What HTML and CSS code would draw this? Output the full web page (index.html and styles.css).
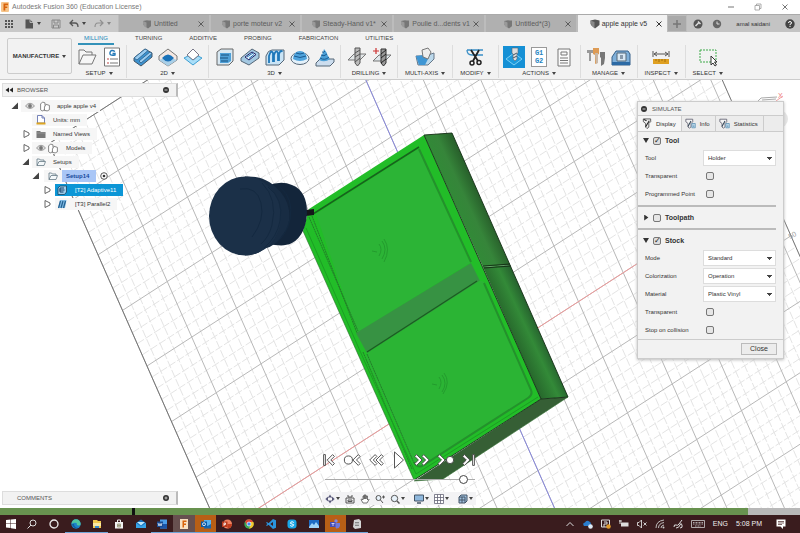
FILE: index.html
```html
<!DOCTYPE html>
<html lang="en">
<head>
<meta charset="utf-8">
<title>Autodesk Fusion 360 (Education License)</title>
<link rel="stylesheet" href="styles.css">
</head>
<body>
<svg class="sprite" aria-hidden="true">
  <defs>
    <symbol id="cube" viewBox="0 0 10 10"><path d="M1 2 5 1l4 1v5L6 9 5 4 1 3.500z" fill="#858585"/><path d="M1 2h5l3-.5V7L6 9.500 2.500 7 1 5z" fill="#777"/><path d="M1 2l3.500 1.500V9L2 7 1 5z" fill="#9a9a9a"/></symbol>
    <symbol id="cube-dark" viewBox="0 0 10 10"><path d="M.5 1.500 5 .5l4.500 1V6L5 9.500 2 7 .5 5z" fill="#555"/><path d="M.5 1.500 4.500 3v6L1.500 6.500z" fill="#888"/></symbol>
    <symbol id="x" viewBox="0 0 8 8"><path d="M1.500 1.500l5 5M6.500 1.500l-5 5" stroke="currentColor" fill="none"/></symbol>
    <symbol id="eye" viewBox="0 0 10 8"><path d="M.5 4Q5-1.500 9.500 4 5 9 .5 4z" fill="#ddd" stroke="#888" stroke-width=".8"/><circle cx="5" cy="4" r="1.900" fill="#777"/></symbol>
    <symbol id="comp" viewBox="0 0 10 10"><path d="M1 2.500 3 1l2 .7V4l1-1 3 1v4L7 9 4.500 8.500V8L2.500 9 1 8z" fill="#fff" stroke="#666" stroke-width=".7"/><path d="M4.500 8.500V5L6 4" fill="none" stroke="#666" stroke-width=".7"/></symbol>
    <symbol id="folder" viewBox="0 0 10 10"><path d="M1 8.500V2h2.500l.8 1H8v1.500M1 8.500l2-4h6.500L8 8.500z" fill="#f4f8fa" stroke="#667a85" stroke-width=".8"/></symbol>
    <symbol id="folder-grey" viewBox="0 0 10 10"><path d="M.5 2H4l1 1h4.500v6h-9z" fill="#777"/><path d="M.5 4h9" stroke="#aaa" stroke-width=".6"/></symbol>
    <symbol id="units" viewBox="0 0 10 10"><path d="M1.500.5H6L8.500 3v5h-7z" fill="#fff" stroke="#5566aa" stroke-width=".8"/><path d="M6 .5V3h2.500" fill="none" stroke="#5566aa" stroke-width=".8"/><path d="M.5 7.500h9v2h-9z" fill="#dda520"/></symbol>
    <symbol id="tri" viewBox="0 0 8 8"><path d="M7 .5V7H.5z" fill="#444"/></symbol>
    <symbol id="tri-right" viewBox="0 0 8 8"><path d="M2 .5v7L7 5V3z" fill="#fff" stroke="#555" stroke-width=".9"/></symbol>
    <symbol id="op-adaptive" viewBox="0 0 10 10"><path d="M1 3 3 1h6.500v6l-2 2.500H1z" fill="#9fcdea" stroke="#1a4460" stroke-width=".8"/><path d="M3 3h4M2.500 5h5M3 7h3.500M3 3v4" stroke="#14406a" fill="none"/></symbol>
    <symbol id="op-parallel" viewBox="0 0 10 10"><path d="M1 9 3 1h6.500L8 9z" fill="#7db9e4"/><path d="M1.500 9l2-7M4 9l2-7M6.500 9l2-7" stroke="#24608f" stroke-width="1.200"/></symbol>
    <symbol id="minus" viewBox="0 0 8 8"><circle cx="4" cy="4" r="3" fill="#333"/><path d="M2.500 4h3" stroke="#ddd" stroke-width=".9"/></symbol>
    <symbol id="endmill" viewBox="0 0 10 12"><path d="M1 1h8v3L7 6v4l-2 1.500L3.500 10V6L1 4z" fill="#eee" stroke="#444" stroke-width=".9"/><path d="M3.500 9.500 7.500 3M1.500 1.500l3 1.500" stroke="#222" stroke-width="1.200"/></symbol>
    <symbol id="endmill-info" viewBox="0 0 14 12"><path d="M1 1h8v3L7 6v4l-2 1.500L3.500 10V6L1 4z" fill="#f4f4f4" stroke="#556" stroke-width=".9"/><path d="M3.500 9.500 7 3" stroke="#345" stroke-width="1.200"/><path d="M8 6h4v5H8z" fill="#cde4f2" stroke="#4a86ad" stroke-width=".8"/><path d="M9 8h2M9 9.500h2" stroke="#4a86ad" stroke-width=".7"/></symbol>
  </defs>
</svg>

<div class="app">
  <header class="titlebar">
    <svg class="i10" viewBox="0 0 10 10"><rect x="1" width="8" height="10" rx="1" fill="#f6c58b"/><path d="M3.500 8.500v-7H8v1.700H5.300v1.300h2v1.600h-2v2.400z" fill="#d8620a"/></svg>
    <h1>Autodesk Fusion 360 (Education License)</h1>
    <div class="window-controls">
      <button aria-label="Minimize"><svg class="i8" viewBox="0 0 8 8"><path d="M1 4h6" stroke="#777"/></svg></button>
      <button aria-label="Restore"><svg class="i8" viewBox="0 0 8 8"><path d="M1 2.500h4.500v4.500H1zM2.500 2.500V1H7v4.500H5.500" fill="none" stroke="#999" stroke-width=".8"/></svg></button>
      <button aria-label="Close window"><svg class="i8"><use href="#x"/></svg></button>
    </div>
  </header>

  <div class="docbar">
    <div class="quick">
      <button aria-label="Data panel"><svg class="i10" viewBox="0 0 10 10"><path d="M1 1h2v2H1zm3 0h2v2H4zm3 0h2v2H7zM1 4h2v2H1zm3 0h2v2H4zm3 0h2v2H7zM1 7h2v2H1zm3 0h2v2H4zm3 0h2v2H7z" fill="#555"/></svg></button>
      <button aria-label="File"><svg class="i10" viewBox="0 0 10 10"><path d="M1.500.5H6L9 3.500v6H1.500z" fill="#555"/><path d="M6 .5v3h3" fill="none" stroke="#ccc" stroke-width=".8"/></svg><span class="caret"></span></button>
      <button aria-label="Save"><svg class="i10" viewBox="0 0 10 10"><path d="M1 1h8v8H1zM3 1v3h4V1M2.500 9V6h5v3" fill="none" stroke="#888"/></svg></button>
      <button aria-label="Undo"><svg class="i10" viewBox="0 0 10 10"><path d="M4 1 1 4l3 3M1 4h5q3 0 3 4" fill="none" stroke="#555" stroke-width="1.300"/></svg><span class="caret"></span></button>
      <button aria-label="Redo"><svg class="i10" viewBox="0 0 10 10"><path d="M6 1l3 3-3 3M9 4H4Q1 4 1 8" fill="none" stroke="#909090" stroke-width="1.200"/></svg><span class="caret faint"></span></button>
    </div>
    <nav class="doctabs" aria-label="Documents">
      <div class="doctab"><a href="#"><svg class="i10"><use href="#cube"/></svg>Untitled</a><button aria-label="Close"><svg class="i8"><use href="#x"/></svg></button></div>
      <div class="doctab"><a href="#"><svg class="i10"><use href="#cube"/></svg>porte moteur v2</a><button aria-label="Close"><svg class="i8"><use href="#x"/></svg></button></div>
      <div class="doctab"><a href="#"><svg class="i10"><use href="#cube"/></svg>Steady-Hand v1*</a><button aria-label="Close"><svg class="i8"><use href="#x"/></svg></button></div>
      <div class="doctab"><a href="#"><svg class="i10"><use href="#cube"/></svg>Poulie d...dents v1</a><button aria-label="Close"><svg class="i8"><use href="#x"/></svg></button></div>
      <div class="doctab"><a href="#"><svg class="i10"><use href="#cube"/></svg>Untitled*(3)</a><button aria-label="Close"><svg class="i8"><use href="#x"/></svg></button></div>
      <div class="doctab active"><a href="#"><svg class="i10"><use href="#cube-dark"/></svg>apple apple v5</a><button aria-label="Close"><svg class="i8"><use href="#x"/></svg></button></div>
    </nav>
    <button class="newtab" aria-label="New tab"><svg class="i10" viewBox="0 0 10 10"><path d="M5 1v8M1 5h8" stroke="#777" stroke-width="1.500"/></svg></button>
    <div class="account">
      <button aria-label="Extensions"><svg class="i10" viewBox="0 0 10 10"><circle cx="5" cy="5" r="4.500" fill="#555"/><path d="M2.500 7 6 3.500M5 2.500 7.500 5" stroke="#ddd" stroke-width="1.500"/></svg></button>
      <button aria-label="Job status"><svg class="i10" viewBox="0 0 10 10"><circle cx="5" cy="5" r="4.200" fill="#666"/><path d="M5 2.500V5h2.500" stroke="#ddd" fill="none"/></svg></button>
      <button class="user">amal saidani</button>
      <button aria-label="Help"><svg class="i10" viewBox="0 0 10 10"><circle cx="5" cy="5" r="4.700" fill="#444"/><path d="M3.500 4Q3.500 2.500 5 2.500T6.500 4Q6.500 5 5 5.300V6M5 6.800V8" stroke="#fff" fill="none"/></svg></button>
    </div>
  </div>

  <div class="ribbon">
    <button class="workspace">MANUFACTURE<span class="caret"></span></button>
    <div class="ribbon-main">
      <nav class="ribbon-tabs" aria-label="Ribbon">
        <a href="#" class="on">MILLING</a><a href="#">TURNING</a><a href="#">ADDITIVE</a><a href="#">PROBING</a><a href="#">FABRICATION</a><a href="#">UTILITIES</a>
      </nav>
      <div class="groups">
        <section class="group">
          <div class="tools">
            <button aria-label="New setup"><svg class="i20" viewBox="0 0 20 20"><path d="M2 17V3h5l2 2h6v3M2 17l4-9h13l-4 9z" fill="#f6f6f6" stroke="#777"/></svg></button>
            <button aria-label="NC program"><svg class="i20" viewBox="0 0 20 20"><path d="M2.500 1h15v18h-15z" fill="#fff" stroke="#777"/><path d="M13 4.500Q9 2 8 5.500T13 8V6.500h-2.500" fill="none" stroke="#2379b8" stroke-width="1.400"/><path d="M5 12h2M5 16h2" stroke="#b44"/><path d="M8 12h8M8 16h8" stroke="#777"/></svg></button>
          </div><button class="label">SETUP<span class="caret"></span></button>
        </section>
        <section class="group">
          <div class="tools">
            <button aria-label="2D adaptive"><svg class="i20" viewBox="0 0 20 20"><path d="M1 11 12 2l7 4v4L8 19l-7-5z" fill="#3d93d0" stroke="#456"/><path d="M1 11 12 2l3 1.500L4 13zM6 14 17 5l2 1.500L8 16z" fill="#9ccdf0" stroke="#2b5f8a" stroke-width=".8"/></svg></button>
            <button aria-label="2D pocket"><svg class="i20" viewBox="0 0 20 20"><path d="M1 9l9-7 9 7v4l-9 6-9-6z" fill="#f5e8e2" stroke="#777"/><path d="M1 13l9-3 9 3-9 6z" fill="#a9cfe8"/><path d="M4 11q6-7 12 0-6 7-12 0z" fill="#1c72b8"/></svg></button>
            <button aria-label="Face"><svg class="i20" viewBox="0 0 20 20"><path d="M1 11l9 7 9-7-4-2-5 4-5-4z" fill="#a9def8" stroke="#3f9fd2"/><path d="M4 8l6-6 6 6-6 5z" fill="#fff" stroke="#778"/></svg></button>
          </div><button class="label">2D<span class="caret"></span></button>
        </section>
        <section class="group">
          <div class="tools">
            <button aria-label="3D adaptive"><svg class="i20" viewBox="0 0 20 20"><path d="M2 5l4-3h12v12l-4 4H2z" fill="#d8e8f2" stroke="#666"/><path d="M5 6h11v8l-3 2H5z" fill="#4ea0d8"/><path d="M6 8h8M5 11h8M6 14h7" stroke="#16507f" stroke-width="1.200"/></svg></button>
            <button aria-label="3D pocket"><svg class="i20" viewBox="0 0 20 20"><path d="M1 11 12 2l7 4v5L9 18l-8-4z" fill="#a4c9e2" stroke="#567"/><path d="M5 10l7-5 4 2.500-7 5.500z" fill="#e8f5ff" stroke="#226"/><path d="M7 10l6-4M9 11.500 14 7.500" stroke="#1b6fb0"/></svg></button>
            <button aria-label="Parallel"><svg class="i20" viewBox="0 0 20 20"><path d="M1 15V9Q3 3 7 3h12v10l-5 5H1z" fill="#c9e4f6" stroke="#567"/><path d="M4 16V9q2-7 4-3v9M9 15V8q2-6 4-2v8M14 14V7q2-5 3-2" fill="none" stroke="#1e78ba" stroke-width="1.800"/></svg></button>
            <button aria-label="Contour"><svg class="i20" viewBox="0 0 20 20"><ellipse cx="10" cy="11.500" rx="9" ry="6" fill="#e4f1fa" stroke="#567"/><path d="M3 12Q4 4 10 4t7 8q-7 4-14 0z" fill="#4fa3dc"/><path d="M4 9q6 3 12 0M6 6q4 2 8 0" fill="none" stroke="#1a5a90"/></svg></button>
            <button aria-label="Ramp"><svg class="i20" viewBox="0 0 20 20"><path d="M1 16l4-4h14v3l-4 4H1z" fill="#cde" stroke="#567"/><path d="M4 13q6 3 11-1l-2-3q-1-4-4-7-1 5-3 7z" fill="#4b9fd6"/><path d="M5 11q5 3 9-1M6 8q3 2 6-1M7 5q2 1 3-1" fill="none" stroke="#1b5c93"/></svg></button>
          </div><button class="label">3D<span class="caret"></span></button>
        </section>
        <section class="group">
          <div class="tools">
            <button aria-label="Drill"><svg class="i20" viewBox="0 0 20 20"><path d="M1 13l6-6h12l-6 6z" fill="#e2e6e8" stroke="#777"/><path d="M8 1h5v15l-2.500 3L8 16z" fill="#bbb" stroke="#555"/><path d="M8 6l5-3M8 10l5-3M8 15l5-4" stroke="#555"/></svg></button>
            <button aria-label="Hole recognition"><svg class="i20" viewBox="0 0 20 20"><path d="M1 14l6-6h12l-6 6z" fill="#dfe8ec" stroke="#777"/><path d="M9 2h5v14l-2.500 3L9 16z" fill="#999" stroke="#333"/><path d="M9 7l5-4M9 11l5-4M9 16l5-4" stroke="#222"/><path d="M1 4h6M4 1v6" stroke="#c33" stroke-width="1.200"/></svg></button>
          </div><button class="label">DRILLING<span class="caret"></span></button>
        </section>
        <section class="group single">
          <div class="tools">
            <button aria-label="Multi-axis"><svg class="i20" viewBox="0 0 20 20"><path d="M1 9h9l9-3v6l-6 6H3z" fill="#bcd9ec" stroke="#678"/><path d="M1 9l8-1 4 4-3 6H4z" fill="#3f96d4"/><path d="M7 3l6-2 3 4-3 7-5-2z" fill="#eee" stroke="#777"/></svg></button>
          </div><button class="label">MULTI-AXIS<span class="caret"></span></button>
        </section>
        <section class="group single">
          <div class="tools">
            <button aria-label="Modify"><svg class="i20" viewBox="0 0 20 20"><path d="M2 3h16M2 3q0 5 5 5h11" fill="none" stroke="#3a8fc6" stroke-width="1.300"/><path d="M6 3l7 11M14 3 8 14" stroke="#222" stroke-width="1.800"/><circle cx="7" cy="16" r="2" fill="none" stroke="#222" stroke-width="1.500"/><circle cx="14" cy="15.500" r="2" fill="none" stroke="#222" stroke-width="1.500"/></svg></button>
          </div><button class="label">MODIFY<span class="caret"></span></button>
        </section>
        <section class="group">
          <div class="tools">
            <button class="pressed" aria-label="Simulate"><svg class="i20" viewBox="0 0 20 20"><path d="M2 12l8-6 8 6-8 6z" fill="#1e9bdd" stroke="#7cd0f5"/><path d="M8 1h6v5l-1 1v5l-2 2-2-2V7L8 6z" fill="#ddd" stroke="#567" stroke-width=".6"/><path d="M9 8l4-2M9 11l4-2" stroke="#456"/></svg></button>
            <button aria-label="Post process" class="gcode"><span>G1<br>G2</span></button>
            <button aria-label="Setup sheet"><svg class="i20" viewBox="0 0 20 20"><path d="M4 2h12v17H4z" fill="#fafafa" stroke="#777"/><path d="M7 5h6v3H7zM6 11h8M6 13.500h8M6 16h8" fill="none" stroke="#777"/></svg></button>
          </div><button class="label">ACTIONS<span class="caret"></span></button>
        </section>
        <section class="group">
          <div class="tools">
            <button aria-label="Tool library"><svg class="i20" viewBox="0 0 20 20"><path d="M1 3h6v3H5v8H3V6H1z" fill="#9a9a9a"/><path d="M7 1h6v6l-2 1v8l-2 1V8L7 7z" fill="#dd9b55"/><path d="M9 6h3v10l-2 1z" fill="#c8b8a8"/><path d="M14 5h5v6l-1 6-3 2v-8l-1-1z" fill="#777"/></svg></button>
            <button aria-label="Machine library"><svg class="i20" viewBox="0 0 20 20"><path d="M1 10l4-6h12l2 3v11H1z" fill="#7fb0da" stroke="#345f88"/><path d="M6 6h9v8H6z" fill="#d9e9f5" stroke="#567"/><path d="M9 8h3v4H9z" fill="#89a"/><path d="M1 15h18v3H1z" fill="#2c6aa5"/></svg></button>
          </div><button class="label">MANAGE<span class="caret"></span></button>
        </section>
        <section class="group single">
          <div class="tools">
            <button aria-label="Measure"><svg class="i20" viewBox="0 0 20 20"><path d="M2 4v6M18 4v6M3 7h14M6 5 3 7l3 2M14 5l3 2-3 2" fill="none" stroke="#555"/><path d="M2 12h16v5H2z" fill="#dfa021"/><path d="M5 12v2M8 12v3M11 12v2M14 12v3" stroke="#8a5a00" stroke-width=".7"/></svg></button>
          </div><button class="label">INSPECT<span class="caret"></span></button>
        </section>
        <section class="group single last">
          <div class="tools">
            <button aria-label="Select"><svg class="i20" viewBox="0 0 20 20"><path d="M2 3h16v12H2z" fill="none" stroke="#3faa4a" stroke-dasharray="2 1"/><path d="M13 9v9l2-2 2 3 1.500-1-2-3h2.500z" fill="#fff" stroke="#333"/></svg></button>
          </div><button class="label">SELECT<span class="caret"></span></button>
        </section>
      </div>
    </div>
  </div>

  <main class="stage">
    <svg class="scene" viewBox="0 80 800 428" preserveAspectRatio="xMidYMid slice" role="img" aria-label="3D view of the stock and tool holder">
      <defs>
        <linearGradient id="side" gradientUnits="userSpaceOnUse" x1="462" y1="225" x2="499" y2="208"><stop offset="0" stop-color="#318a37"/><stop offset=".35" stop-color="#36853a"/><stop offset=".65" stop-color="#2a652d"/><stop offset="1" stop-color="#204d24"/></linearGradient>
        <linearGradient id="side2" gradientUnits="userSpaceOnUse" x1="516" y1="345" x2="546" y2="331"><stop offset="0" stop-color="#27682c"/><stop offset=".5" stop-color="#338a38"/><stop offset="1" stop-color="#20502a"/></linearGradient>
      </defs>
      <!-- unit cell of the ground plane is one major square -->
      <g transform="matrix(44.75 -28.9 24.5 55.6 147 366)">
        <path id="grid-minor" class="grid minor"/>
        <path id="grid-major" class="grid major"/>
        <path class="grid edge" d="M12.200-4H0V6M12.200-4V12"/>
        <path class="grid axis-x" d="M0 3H12.200"/>
        <path class="grid axis-y" d="M6-4V12"/>
      </g>
      <g class="viewcube"><path d="M757 102l4-4 16-1M762 100l14-1" fill="none" stroke="#aaa"/><path d="M776 101l7-5" stroke="#f3a0a0"/><text x="778" y="98">X</text></g>
      <circle cx="779" cy="119" r="9" fill="#ccc" opacity=".5"/>
      <text class="mark" x="790" y="239" transform="rotate(-28 790 239)">50</text>

      <path d="M309 209 424 135 541 399 414 480 303 231z" fill="#22bd28"/>
      <path d="M424 135l28-2 58 132-27 2z" fill="url(#side)"/>
      <path d="M483 267l27-2 58 132-27 2z" fill="url(#side2)"/>
      <path d="M541 399l27-2-125 82-29 2z" fill="#365f35"/>
      <path d="M316 214 418 149 470 263 357 333z" fill="#2cb436"/>
      <path d="M356 333 471 263l9 18-113 72z" fill="#379243"/>
      <path d="M369 352 479 281q5-1 7 4l44 104q2 6-3 9l-106 68q-5 2-8-4L367 360q-2-5 2-8z" fill="#2bb434"/>
      <g fill="none">
        <path d="M313 214 419 147" stroke="#17631d" stroke-width="1.500"/>
        <path d="M367 352 477 281" stroke="#1b5e22" stroke-width="1.400"/>
        <path d="M419 149 471 262M484 283l47 107q2 5-3 8l-106 68q-5 2-8-4" stroke="#24912c" stroke-width="2"/>
        <path d="M309 217 358 331M312 216 357 333M367 354 414 463M363 352 412 469" stroke="#227f28" stroke-dasharray="2 .5"/>
        <path d="M306 228 364 360 416 474 538 397" stroke="#1d9d24"/>
        <path d="M424 135 541 399 414 480M424 135l28-2 116 264-27 2M483 266l27-2M484 268l27-2" stroke="#132c14" stroke-width=".9"/>
        <path d="M414 481l29-2 125-82M303 231 414 480" stroke="#2a6a2a" stroke-width=".6"/>
        <path d="M379 244q4 5 0 12M382 241q6 8 0 18M384 239q7 10 0 23M372 251l5 1M439 377q4 5 0 12M442 375q6 8 0 17M444 373q7 9-1 21M432 384l5 1" stroke="#23982c" stroke-width=".9"/>
      </g>
      <path d="M306 210l8-1v6l-8 1z" fill="#15171a"/>
      <path d="M267 186q14-6 25-1c11 4 15 15 15 27s-5 26-15 31c-8 4-16 2-23 1z" fill="#13253a"/>
      <path d="M245 176.500q10-.5 17 2 8 3 13 8 12 10 14 24t-6 24q-8 12-18 14-9 7-20 7z" fill="#182c43"/>
      <ellipse cx="245" cy="216" rx="36" ry="39.500" fill="#1b3048"/>
      <path d="M240 189q17-3 21 14t-9 34M268 187q16 12 12 34-3 16-16 27M280 187q14 12 10 32-3 15-14 24M262 183q16 16 10 42-3 12-11 19" fill="none" stroke="#142940"/>
    </svg>

    <aside class="browser">
      <header class="bar"><svg class="i8" viewBox="0 0 8 8"><path d="M4 1.500v5L.5 4zM8 1.500v5L4.500 4z" fill="#222"/></svg><h2>BROWSER</h2><button aria-label="Collapse browser"><svg class="i8"><use href="#minus"/></svg></button></header>
      <ul class="tree">
        <li class="l0"><svg class="i8"><use href="#tri"/></svg><span class="row"><svg class="i10"><use href="#eye"/></svg><svg class="i12"><use href="#comp"/></svg><b>apple apple v4</b></span></li>
        <li class="l1"><span class="nub"></span><span class="row"><svg class="i10"><use href="#units"/></svg><b>Units: mm</b></span></li>
        <li class="l1"><svg class="i8"><use href="#tri-right"/></svg><span class="row"><svg class="i10"><use href="#folder-grey"/></svg><b>Named Views</b></span></li>
        <li class="l1"><svg class="i8"><use href="#tri-right"/></svg><span class="row"><svg class="i10"><use href="#eye"/></svg><svg class="i12"><use href="#comp"/></svg><b>Models</b></span></li>
        <li class="l1"><svg class="i8"><use href="#tri"/></svg><span class="row"><svg class="i10"><use href="#folder"/></svg><b>Setups</b></span></li>
        <li class="l2"><svg class="i8"><use href="#tri"/></svg><span class="row setup"><svg class="i10"><use href="#folder"/></svg><b>Setup14</b></span><svg class="i8" viewBox="0 0 8 8"><circle cx="4" cy="4" r="3.300" fill="#fff" stroke="#444" stroke-width=".9"/><circle cx="4" cy="4" r="1.300" fill="#333"/></svg></li>
        <li class="l3"><svg class="i8"><use href="#tri-right"/></svg><span class="row selected"><svg class="i10"><use href="#op-adaptive"/></svg><b>[T2] Adaptive11</b></span></li>
        <li class="l3"><svg class="i8"><use href="#tri-right"/></svg><span class="row"><svg class="i10"><use href="#op-parallel"/></svg><b>[T3] Parallel2</b></span></li>
      </ul>
    </aside>

    <div class="comments bar"><h2>COMMENTS</h2><button aria-label="Expand comments"><svg class="i8" viewBox="0 0 8 8"><circle cx="4" cy="4" r="3" fill="#333"/><path d="M2.500 4h3M4 2.500v3" stroke="#ddd" stroke-width=".8"/></svg></button></div>

    <form class="simulate">
      <header><svg class="i8"><use href="#minus"/></svg><h2>SIMULATE</h2></header>
      <nav class="sim-tabs"><a href="#" class="on"><svg class="i12"><use href="#endmill"/></svg>Display</a><a href="#"><svg class="i12"><use href="#endmill-info"/></svg>Info</a><a href="#"><svg class="i12"><use href="#endmill-info"/></svg>Statistics</a></nav>
      <fieldset>
        <label class="head"><i class="fold open"></i><input type="checkbox" checked>Tool</label>
        <div class="field"><label for="tool">Tool</label><select id="tool"><option>Holder</option></select></div>
        <div class="field"><label for="tt">Transparent</label><input id="tt" type="checkbox"></div>
        <div class="field"><label for="pp">Programmed Point</label><input id="pp" type="checkbox"></div>
      </fieldset>
      <fieldset><label class="head"><i class="fold"></i><input type="checkbox">Toolpath</label></fieldset>
      <fieldset>
        <label class="head"><i class="fold open"></i><input type="checkbox" checked>Stock</label>
        <div class="field"><label for="mode">Mode</label><select id="mode"><option>Standard</option></select></div>
        <div class="field"><label for="color">Colorization</label><select id="color"><option>Operation</option></select></div>
        <div class="field"><label for="mat">Material</label><select id="mat"><option>Plastic Vinyl</option></select></div>
        <div class="field"><label for="st">Transparent</label><input id="st" type="checkbox"></div>
        <div class="field"><label for="sc">Stop on collision</label><input id="sc" type="checkbox"></div>
      </fieldset>
      <footer><button type="button">Close</button></footer>
    </form>

    <div class="bottom">
      <div class="player">
        <button aria-label="Go to start"><svg viewBox="0 0 20 20"><path d="M4 4h2v12H4zM14 4l-6 6 6 6 2-2-4-4 4-4z"/></svg></button>
        <button aria-label="Previous operation"><svg viewBox="0 0 20 20"><circle cx="6" cy="10" r="4.500"/><path d="M17 4l-6 6 6 6 2-2-4-4 4-4z"/></svg></button>
        <button aria-label="Rewind"><svg viewBox="0 0 20 20"><path d="M9 4l-6 6 6 6 2-2-4-4 4-4zM16 4l-6 6 6 6 2-2-4-4 4-4z"/></svg></button>
        <button class="play" aria-label="Play"><svg viewBox="0 0 20 20"><path d="M5 1l10 9-10 9z"/></svg></button>
        <button aria-label="Fast forward"><svg viewBox="0 0 20 20"><path d="M4 4l6 6-6 6-2-2 4-4-4-4zM12 4l6 6-6 6-2-2 4-4-4-4z"/></svg></button>
        <button aria-label="Next operation"><svg viewBox="0 0 20 20"><path d="M3 4l6 6-6 6-2-2 4-4-4-4z"/><circle cx="14.500" cy="10" r="4"/></svg></button>
        <button aria-label="Go to end"><svg viewBox="0 0 20 20"><path d="M5 4l6 6-6 6-2-2 4-4-4-4zM14 4h2v12h-2z"/></svg></button>
      </div>
      <input class="scrub" type="range" min="0" max="100" value="95" aria-label="Simulation position">
      <div class="navbar">
        <button aria-label="Orbit"><svg class="i10" viewBox="0 0 10 10"><path d="M5 .5 6.500 3h-3zM5 9.500 6.500 7h-3zM.5 5 3 3.500v3zM9.500 5 7 3.500v3z" fill="#557"/><ellipse cx="5" cy="5" rx="4" ry="2" fill="none" stroke="#557" stroke-width=".8"/></svg><span class="caret"></span></button>
        <button aria-label="Look at"><svg class="i10" viewBox="0 0 10 10"><path d="M1 4h8v5H1zM3 6h4v1.500H3zM2 2h2v2M6 4V2h2" fill="none" stroke="#555"/></svg></button>
        <button aria-label="Pan"><svg class="i10" viewBox="0 0 10 10"><path d="M3 9 1 5.500l1-.5 1 1V2h1v3V1h1v4-4h1v4l.5-3h1V6l1-1 .5.500L7 9z" fill="#fff" stroke="#555" stroke-width=".8"/></svg></button>
        <button aria-label="Zoom"><svg class="i10" viewBox="0 0 10 10"><circle cx="3.500" cy="4" r="2.500" fill="#e8f2fa" stroke="#555"/><path d="M5.500 6 8 9M7 3h3M8.500 1.500v3" stroke="#555"/></svg></button>
        <button aria-label="Fit"><svg class="i10" viewBox="0 0 10 10"><circle cx="4.500" cy="4.500" r="3.200" fill="#e8f2fa" stroke="#555"/><path d="M7 7l2.500 2.500" stroke="#555" stroke-width="1.500"/></svg><span class="caret"></span></button>
        <button class="gap" aria-label="Display settings"><svg class="i10" viewBox="0 0 10 10"><path d="M.5 1h9v6h-9z" fill="#8fb8dd" stroke="#456"/><path d="M3 9h4" stroke="#456" stroke-width="1.500"/></svg><span class="caret"></span></button>
        <button aria-label="Grid and snaps"><svg class="i10" viewBox="0 0 10 10"><path d="M.5.5h9v9h-9zM3.500.5v9M6.500.5v9M.5 3.500h9M.5 6.500h9" fill="#fff" stroke="#667" stroke-width=".8"/></svg><span class="caret"></span></button>
        <button class="gap" aria-label="Viewports"><svg class="i10" viewBox="0 0 10 10"><path d="M1 3l2-2h6v6L7 9H1z" fill="#9fc0de" stroke="#456"/><path d="M1 3h6v6M4 3v6M1 6h6" fill="none" stroke="#456"/></svg><span class="caret"></span></button>
      </div>
    </div>
  </main>

  <div class="timeline" role="progressbar" aria-label="Simulation progress"><i class="done-a"></i><i class="mark-op"></i><i class="done-b"></i><i class="rest"></i></div>

  <footer class="taskbar">
    <div class="apps">
      <button aria-label="Start"><svg class="i10" viewBox="0 0 10 10"><path d="M0 1l4.500-.5v4H0zM5 .5 10 0v4.500H5zM0 5h4.500v4L0 8.500zM5 5h5v5l-5-.7z" fill="#fff"/></svg></button>
      <button aria-label="Search"><svg class="i10" viewBox="0 0 10 10"><circle cx="6" cy="4" r="3" fill="none" stroke="#ddd"/><path d="M4 6 .5 9.500" stroke="#ddd"/></svg></button>
      <button aria-label="Cortana"><svg class="i10" viewBox="0 0 10 10"><circle cx="5" cy="5" r="4" fill="none" stroke="#eee" stroke-width="1.300"/></svg></button>
      <button class="run" aria-label="Edge"><svg class="i10" viewBox="0 0 10 10"><circle cx="5" cy="5" r="4.700" fill="#1b82c9"/><path d="M.5 5Q1 .3 5 .3T9.700 5Q9.500 7 7 6.500 5 6 6 4.500 4 3 .5 5z" fill="#4fc6a0"/><path d="M3 5q0 3 4 4-5 1-6-4z" fill="#125e9c"/></svg></button>
      <button class="run" aria-label="File Explorer"><svg class="i10" viewBox="0 0 10 10"><path d="M1 1h4l1 1h3v7H1z" fill="#f2c94f"/><path d="M1 4h8v3H1z" fill="#fbe9a4"/><path d="M3 7h4v2H3z" fill="#3a8ed0"/></svg></button>
      <button aria-label="Store"><svg class="i10" viewBox="0 0 10 10"><path d="M1 3h8v6.500H1z" fill="#f2f2f2"/><path d="M3.500 3V1h3v2" fill="none" stroke="#eee"/><path d="M3.500 5h3v3h-3zM5 5v3M3.500 6.500h3" fill="none" stroke="#886" stroke-width=".7"/></svg></button>
      <button aria-label="Mail"><svg class="i10" viewBox="0 0 10 10"><path d="M0 4l5-3.500L10 4v5H0z" fill="#1774c0"/><path d="M1 3h8L5 6.500z" fill="#bfe6fb"/><path d="M0 4l5 3.500L10 4v5H0z" fill="#37a4e8"/></svg></button>
      <button class="run" aria-label="Word"><svg class="i10" viewBox="0 0 10 10"><path d="M3 .5h7v9H3z" fill="#4c9de8"/><path d="M3 5h7v4.500H3z" fill="#1c55a8"/><path d="M0 2.500h6v5.500H0z" fill="#174a93"/><path d="M1 4l1 3 1-2.500L4 7l1-3" fill="none" stroke="#fff" stroke-width=".7"/></svg></button>
      <button class="run current" aria-label="Fusion 360"><svg class="i10" viewBox="0 0 10 10"><path d="M1 0h8v10H1z" fill="#f9dfc0"/><path d="M3.500 8.500v-7H7.500V3H5v1.500h2V6H5v2.500z" fill="#d8620a"/></svg></button>
      <button class="run alert" aria-label="Outlook"><svg class="i10" viewBox="0 0 10 10"><path d="M3 1h7v8H3z" fill="#5bb2ee"/><path d="M3 5l3.500 2L10 5v4.500H3z" fill="#1667b0"/><path d="M0 2.500h6v5.500H0z" fill="#0d5aa5"/><circle cx="3" cy="5.200" r="1.500" fill="none" stroke="#fff" stroke-width=".8"/></svg></button>
      <button class="run" aria-label="PowerPoint"><svg class="i10" viewBox="0 0 10 10"><circle cx="5.500" cy="5" r="4.500" fill="#ee8160"/><path d="M5.500 5H10a4.500 4.500 0 0 1-4.500 4.500z" fill="#c23f1f"/><path d="M0 2.500h5.500V8H0z" fill="#b93a1c"/><path d="M2 7V4h1.500v1.500H2" fill="none" stroke="#fff" stroke-width=".8"/></svg></button>
      <button class="run" aria-label="Chrome"><svg class="i10" viewBox="0 0 10 10"><circle cx="5" cy="5" r="4.700" fill="#3aa757"/><path d="M1 2.500a4.700 4.700 0 0 1 8.300.5H5L3 6z" fill="#e04634"/><path d="M9.300 3A4.700 4.700 0 0 1 5 9.700L7 5 5 3z" fill="#f6c62b"/><circle cx="5" cy="5" r="2" fill="#4285f4" stroke="#fff" stroke-width=".7"/></svg></button>
      <button class="run" aria-label="Visual Studio Code"><svg class="i10" viewBox="0 0 10 10"><path d="M7 0l3 1.200v7.600L7 10 2.500 5.800 1 7 0 6.300 1.500 5 0 3.700 1 3l1.500 1.200zM7 3 4.300 5 7 7z" fill="#2b94dd"/></svg></button>
      <button class="run" aria-label="Skype"><svg class="i10" viewBox="0 0 10 10"><rect x=".5" y=".5" width="9" height="9" rx="3" fill="#19a7e8"/><path d="M6.800 3.500Q5 2 3.700 3.300T5 5t1.300 1.700T3.200 6.500" fill="none" stroke="#fff"/></svg></button>
      <button class="run" aria-label="Photos"><svg class="i10" viewBox="0 0 10 10"><path d="M0 1h10v8H0z" fill="#1e6cc4"/><path d="M0 8l3-4 2 2 2-3 3 4v2H0z" fill="#9fd4f8"/></svg></button>
      <button class="run alert" aria-label="Teams"><svg class="i10" viewBox="0 0 10 10"><circle cx="6" cy="2" r="1.700" fill="#8087e0"/><path d="M4 4h6v3q-1 3-4 2.500z" fill="#7178d8"/><path d="M0 3h5.500v5H0z" fill="#464eb8"/><path d="M1.500 4.500h3M3 4.500V7" stroke="#fff" stroke-width=".7"/></svg></button>
      <button class="run" aria-label="Notes"><svg class="i10" viewBox="0 0 10 10"><path d="M2 1l5-1 2 2v7L3 10 1 8z" fill="#d5d5d5"/><path d="M3 3h4v4H3z" fill="#888"/><path d="M3 5h4" stroke="#eee"/></svg></button>
    </div>
    <div class="tray">
      <button aria-label="Hidden icons"><svg class="i10" viewBox="0 0 10 10"><path d="M1.500 7 5 3.500 8.500 7" fill="none" stroke="#ddd"/></svg></button>
      <button aria-label="OneDrive"><svg class="i10" viewBox="0 0 10 10"><path d="M1 7Q-1 4 2 3.500 3 1 5.500 2T8 5v2z" fill="#2a7ccc"/><circle cx="7.500" cy="7.500" r="2.300" fill="#dfeaf5"/></svg></button>
      <button aria-label="Updates"><svg class="i10" viewBox="0 0 10 10"><path d="M.5 1h8v7h-8zM3 3h3v2H3v3" fill="none" stroke="#ddd"/><circle cx="7.500" cy="7.500" r="2.300" fill="#e09a2a"/></svg></button>
      <button aria-label="Battery"><svg class="i10" viewBox="0 0 10 10"><path d="M2 3.500h7.500v4H2z" fill="#ddd"/><path d="M0 2h3M1 1v4" stroke="#ddd"/></svg></button>
      <button aria-label="Muted"><svg class="i10" viewBox="0 0 10 10"><path d="M.5 3.500H2L4.500 1v8L2 6.500H.5zM6.500 3.500l3 3M9.500 3.500l-3 3" fill="none" stroke="#ddd" stroke-width=".9"/></svg></button>
      <button aria-label="Network"><svg class="i10" viewBox="0 0 10 10"><path d="M1 9Q1 2 9 1M3.500 9q0-4.500 5.500-5.500M6 9q0-2.500 3-3" fill="none" stroke="#ccc" stroke-width=".9"/><circle cx="8.500" cy="8.500" r="1" fill="#ccc"/></svg></button>
      <button aria-label="Pen"><svg class="i10" viewBox="0 0 10 10"><path d="M1 8q0-3 2-2t3-1l3-4M3 9q3 0 4-3t2 0-2 3" fill="none" stroke="#ddd"/></svg></button>
      <button class="kbd" aria-label="Touch keyboard"><svg viewBox="0 0 14 10"><path d="M.5 1.500h13v7H.5z" fill="none" stroke="#ccc" stroke-width=".8"/><path d="M2 3.500h10M2 5h10M4 7h6" fill="none" stroke="#ccc" stroke-width=".8" stroke-dasharray="1 .5"/></svg></button>
      <button>ENG</button>
      <button class="clock">5:08 PM</button>
      <button aria-label="Notifications"><svg class="i10" viewBox="0 0 10 10"><path d="M.5.5h9V7.500H7V10L4.500 7.500h-4z" fill="#fff"/><path d="M2 2.500h6M2 4h6M2 5.500h4" stroke="#4a2a2a" stroke-width=".7"/></svg></button>
    </div>
  </footer>
</div>
<script src="scene.js"></script>
</body>
</html>
```
FILE: styles.css
```css
* { box-sizing: border-box; }
html, body { height: 100%; }
body { margin: 0; font: 7px/10px "Liberation Sans", Arial, sans-serif; color: #444; background: #fff; overflow: hidden; }
h1, h2, ul, fieldset { margin: 0; padding: 0; border: 0; font: inherit; list-style: none; }
button { display: flex; align-items: center; justify-content: center; padding: 0; border: 0; background: none; font: inherit; color: inherit; }
a { color: inherit; text-decoration: none; }
svg { display: block; flex: none; }
.sprite { position: absolute; width: 0; height: 0; }
.i8 { width: 8px; height: 8px; }
.i10 { width: 10px; height: 10px; }
.i12 { width: 12px; height: 11px; }
.i20 { width: 20px; height: 20px; }
.caret { margin-left: 3px; border: 2px solid transparent; border-top: 3px solid #444; border-bottom: 0; }
.caret.faint { border-top-color: #888; }

.app { display: flex; flex-direction: column; height: 100%; min-width: 720px; }

.titlebar { display: flex; align-items: center; height: 14px; flex: none; color: #777; }
.titlebar h1 { margin-left: 2px; }
.window-controls { display: flex; gap: 19px; margin-left: auto; padding-right: 11px; color: #777; }

.docbar { display: flex; height: 18px; flex: none; background: #bcbcbc; border-top: 1px solid #aaa; }
.quick { display: flex; align-items: center; gap: 10px; width: 118px; padding-left: 4px; background: #c9c9c9; }
.quick button + button + button + button { margin-left: -2px; }
.doctabs { display: flex; flex: 1; gap: 2px; padding-left: 1px; }
.doctab { display: flex; align-items: center; flex: 1; min-width: 0; padding: 0 4px; background: #b0b0b0; color: #5c5c5c; }
.doctab a { display: flex; align-items: center; justify-content: center; gap: 2px; flex: 1; white-space: nowrap; }
.doctab.active { background: #f2f2f2; color: #333; }
.newtab { width: 18px; margin: 1px; background: #aaa; }
.account { display: flex; align-items: center; gap: 9px; padding: 0 5px 0 6px; background: #c4c4c4; }
.account .user { margin: 0 6px 0 5px; color: #333; font-size: 6px; }

.ribbon { display: flex; height: 48px; flex: none; background: #f2f2f2; border-bottom: 1px solid #ccc; font-size: 6px; }
.workspace { width: 65px; height: 36px; margin: 6px 2px 0 7px; border: 1px solid #ccc; border-radius: 2px; font-weight: bold; color: #333; }
.ribbon-main { flex: 1; }
.ribbon-tabs { display: flex; gap: 15px; padding: 2px 0 0 4px; }
.ribbon-tabs a { padding: 0 6px; border-bottom: 2px solid transparent; line-height: 9px; }
.ribbon-tabs .on { color: #1686b8; border-color: #3492b9; }
.groups { display: flex; }
.group { padding: 1px 3px 0; border-right: 1px solid #ddd; height: 33px; }
.group:first-child { padding: 1px 2px 0 0; }
.group.single { padding: 1px 7px 0; }
.group.last { border: 0; }
.tools { display: flex; justify-content: center; }
.tools button { width: 25px; height: 22px; }
.tools .pressed { background: #1590d5; width: 22px; margin: 0 2px 0 1px; }
.gcode span { padding: 1px 3px; border: 1px solid #999; background: #fff; color: #2583bf; font: bold 7px/8px "Liberation Mono", monospace; }
.label { margin: 1px auto 0; line-height: 9px; white-space: nowrap; color: #333; }

.stage { position: relative; flex: 1; min-height: 0; overflow: hidden; }
.scene { position: absolute; inset: 0; width: 100%; height: 100%; }
.grid { fill: none; vector-effect: non-scaling-stroke; }
.minor { stroke: #e4e4e4; stroke-width: 1px; stroke-dasharray: 8 2; }
.major { stroke: #b8b8b8; stroke-width: 1px; }
.edge { stroke: #777; stroke-width: 1px; }
.axis-x { stroke: #ee9a9a; stroke-width: 1px; }
.axis-y { stroke: #8888dd; stroke-width: 1px; }
.viewcube text { fill: #f08080; font-size: 7px; }
.mark { fill: #999; font-size: 7px; }

.browser { position: absolute; left: 2px; top: 3px; width: 176px; font-size: 6px; }
.bar { display: flex; align-items: center; height: 14px; padding: 0 6px 0 2px; background: #f2f2f2; border: 1px solid #ddd; border-right: 2px solid #bbb; color: #555; font-size: 6px; }
.bar h2 { flex: 1; margin-left: 4px; }
.comments { position: absolute; left: 2px; bottom: 3px; width: 176px; }
.comments h2 { margin-left: 12px; }
.tree { padding-top: 2px; color: #333; }
.tree li { display: flex; align-items: center; gap: 2px; height: 14px; }
.tree b { font-weight: normal; padding-left: 6px; white-space: nowrap; }
.l0 { padding-left: 9px; }
.l1 { padding-left: 20px; }
.l2 { padding-left: 30px; }
.l3 { padding-left: 41px; }
.nub { width: 8px; }
.row { display: flex; align-items: center; gap: 4px; height: 12px; padding: 0 4px; background: #f6f6f6; }
.l0 .row { gap: 4px; }
.tree .l0 b { padding-left: 2px; }
.l1 .row { gap: 1px; padding-right: 7px; }
.row.setup { padding: 0 0 0 4px; }
.tree .setup b { padding: 1px 7px 1px 4px; background: #a9c6f6; color: #174a9c; font-weight: bold; }
.tree .l2 { gap: 4px; }
.tree .l3 { gap: 4px; }
.l3 .row { padding: 0 7px 0 2px; }
.tree .l3 b { padding-left: 4px; }
.row.selected { background: #0c96d6; color: #fff; }

.simulate { position: absolute; right: 16px; top: 21px; width: 147px; background: #f2f2f2; border: 1px solid #ccc; box-shadow: 0 1px 3px #bbb; font-size: 6px; color: #333; }
.simulate > header { display: flex; align-items: center; gap: 4px; height: 13px; padding-left: 2px; color: #555; }
.sim-tabs { display: flex; height: 17px; background: #ececec; border-top: 1px solid #ccc; border-bottom: 1px solid #ccc; }
.sim-tabs a { display: flex; align-items: center; gap: 3px; padding: 0 5px 0 3px; border-right: 1px solid #ccc; }
.sim-tabs .on { background: #f6f6f6; }
.simulate fieldset { padding-bottom: 2px; margin-right: 7px; border-bottom: 2px solid #bbb; }
.simulate fieldset + fieldset { padding-top: 2px; }
.simulate fieldset:last-of-type { border: 0; padding-bottom: 0; }
.head { display: flex; align-items: center; gap: 4px; height: 17px; padding-left: 5px; font-size: 7px; font-weight: bold; }
.fold { width: 6px; height: 6px; background: #333; clip-path: polygon(20% 0, 90% 50%, 20% 100%); }
.fold.open { clip-path: polygon(0 10%, 100% 10%, 50% 90%); }
.field { display: grid; grid-template-columns: 1fr 73px; align-items: center; height: 18px; padding-left: 7px; white-space: nowrap; }
.simulate select { appearance: none; height: 16px; padding: 0 4px; border: 1px solid #ddd; border-radius: 0; font: inherit; color: #333; background: linear-gradient(#444, #444) right 3px top 6px / 5px 1px no-repeat, linear-gradient(#444, #444) right 4px top 7px / 3px 1px no-repeat, linear-gradient(#444, #444) right 5px top 8px / 1px 1px no-repeat, #fff; }
.simulate input { appearance: none; width: 8px; height: 8px; margin: 0; border: 1px solid #777; border-radius: 2px; background: #e6e6e6; }
.field input { margin-left: 3px; }
.simulate input:checked { background: #ddd; }
.head input:checked::after { content: "✓"; display: block; font: bold 8px/6px "DejaVu Sans", sans-serif; color: #222; }
.simulate footer { display: flex; justify-content: flex-end; padding: 3px 6px; border-top: 1px solid #ccc; }
.simulate footer button { width: 36px; height: 12px; border: 1px solid #bbb; background: #ececec; font-size: 7px; }

.bottom { position: absolute; left: 50%; bottom: 3px; width: 154px; margin-left: -78px; }
.player { display: flex; justify-content: space-between; align-items: center; margin: 0 -2px; }
.player svg { width: 18px; height: 18px; fill: #fff; stroke: #444; stroke-width: 1px; overflow: visible; }
.scrub { appearance: none; display: block; width: 150px; height: 10px; margin: 5px 0 8px 3px; background: linear-gradient(#aaa, #aaa) center / 100% 1px no-repeat; }
.scrub::-webkit-slider-thumb { appearance: none; width: 9px; height: 9px; border: 1px solid #444; border-radius: 50%; background: #fff; }
.navbar { display: flex; align-items: center; gap: 5px; height: 13px; padding: 0 3px; background: #f3f3f5; }
.navbar .caret { margin-left: 1px; }
.navbar .gap { margin-left: 4px; }

.timeline { display: flex; height: 7px; flex: none; background: #b8b8b8; }
.done-a, .done-b { background: #68924f; }
.done-a { width: 16.5%; }
.mark-op { width: 3px; background: #111; }
.done-b { flex: 1; }
.rest { width: 6.5%; background: #b8b8b8; }

.taskbar { display: flex; justify-content: space-between; height: 18px; flex: none; background: #3a1c1e; color: #eee; }
.apps { display: flex; width: 46%; }
.apps button { flex: 1; border-bottom: 1px solid transparent; }
.apps .run { border-color: #6fa5d8; }
.apps .current { background: #67504f; }
.apps .alert { background: #b85f16; }
.tray { display: flex; align-items: center; gap: 8px; padding-right: 14px; }
.kbd svg { width: 14px; height: 10px; }
.tray .clock { margin-right: 6px; }
```
FILE: scene.js
```js
// Ground plane lines, in units of one major square.
const COLS = 12.2, TOP = -4, BOTTOM = 12;

function lines(step, skipWhole) {
  let d = "";
  const whole = n => n % 5 === 0;
  const k = Math.round(1 / step);
  for (let i = 0; i <= COLS * k; i++) {
    if (!(skipWhole && whole(i))) d += `M${i / k} ${TOP}V${BOTTOM}`;
  }
  for (let j = TOP * k; j <= BOTTOM * k; j++) {
    if (!(skipWhole && whole(j))) d += `M0 ${j / k}H${COLS}`;
  }
  return d;
}

document.getElementById("grid-minor").setAttribute("d", lines(0.2, true));
document.getElementById("grid-major").setAttribute("d", lines(1, false));
```
